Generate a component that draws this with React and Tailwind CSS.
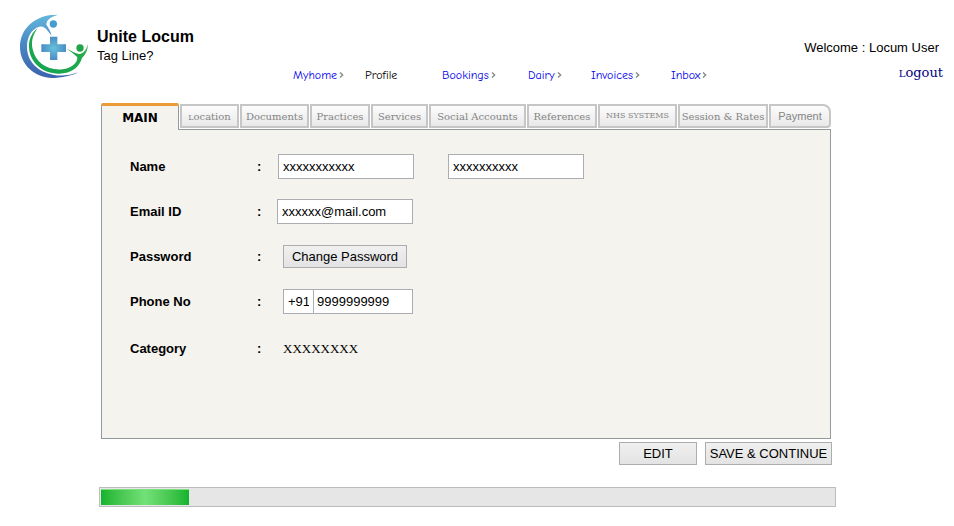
import React from "react";

const sans = "font-['Liberation_Sans',Arial,sans-serif]";
const slab = "font-['DejaVu_Serif',serif]";

const navItems = [
  { label: "Myhome", menu: true },
  { label: "Profile", current: true },
  { label: "Bookings", menu: true },
  { label: "Dairy", menu: true },
  { label: "Invoices", menu: true },
  { label: "Inbox", menu: true },
];

const tabs = [
  { label: "Location", style: "text-[10px] first-letter:text-[8px]" },
  { label: "Documents", style: "text-[10px]" },
  { label: "Practices", style: "text-[10px]" },
  { label: "Services", style: "text-[10px]" },
  { label: "Social Accounts", style: "text-[10px]" },
  { label: "References", style: "text-[10px]" },
  { label: "NHS SYSTEMS", style: "text-[8px]" },
  { label: "Session & Rates", style: "text-[10px]" },
];

const tabBase =
  "h-6 overflow-hidden whitespace-nowrap border-2 border-[#c6c6c6] bg-linear-to-b from-[#fcfcfc] to-[#e9e9e9] text-center text-[#858585]";
const field = "h-[25px] border border-[#abadb3] bg-white px-1 text-[13px] text-black outline-none";
const button = "h-[23px] border border-[#adadad] bg-linear-to-b from-[#f0f0f0] to-[#e3e3e3] text-[13px] text-black";

function Logo() {
  return (
    <svg className="h-16 w-[69px] shrink-0" viewBox="30 28 207 192" role="img" aria-label="Unite Locum logo">
      <defs>
        <linearGradient id="blue" x1="0" y1="0" x2="0" y2="1">
          <stop offset="0" stopColor="#62b8dc" />
          <stop offset=".45" stopColor="#4a88c4" />
          <stop offset="1" stopColor="#3b62ad" />
        </linearGradient>
        <linearGradient id="green" x1="0" y1="1" x2="1" y2="0">
          <stop offset="0" stopColor="#12a551" />
          <stop offset=".6" stopColor="#1fa84c" />
          <stop offset="1" stopColor="#62bb46" />
        </linearGradient>
        <radialGradient id="cross">
          <stop offset="0" stopColor="#67c1da" />
          <stop offset="1" stopColor="#4a8dc6" />
        </radialGradient>
      </defs>
      <path
        fill="url(#blue)"
        d="M144 30C80 28 30 68 30 127C30 184 82 226 140 219C166 217 189 212 206 203C180 212 153 216 129 210C83 201 51 170 51 126C51 96 64 73 88 66C97 64 105 68 111 76L125 93C122 80 116 70 109 60C109 47 120 37 144 30Z"
      />
      <path
        fill="url(#green)"
        d="M84 70C65 84 56 104 57 128C59 176 101 208 147 207C185 206 208 188 216 160C228 149 234 134 234 117C229 136 221 146 207 148C196 147 183 137 170 132C181 140 195 150 202 158C203 175 184 191 158 194C114 199 76 174 68 134C62 109 70 86 84 70Z"
      />
      <path fill="url(#cross)" d="M120 96h22v23h26v23h-26v24h-22v-24H94v-23h26z" />
      <circle cx="130" cy="58" r="11" fill="#459cce" />
      <circle cx="210" cy="130" r="11" fill="#23a34b" />
    </svg>
  );
}

function Chevron() {
  return (
    <svg className="h-2 w-[5px]" viewBox="0 0 5 8" fill="none" stroke="#858585" strokeWidth="1.3" aria-hidden="true">
      <path d="M1 1.5L3.7 4L1 6.5" />
    </svg>
  );
}

function Row({ label, htmlFor, children }) {
  return (
    <>
      {htmlFor ? (
        <label htmlFor={htmlFor} className="font-bold">{label}</label>
      ) : (
        <span className="font-bold">{label}</span>
      )}
      <span className="font-bold">:</span>
      <div className="flex items-center">{children}</div>
    </>
  );
}

export default function App() {
  return (
    <div className={`${sans} min-h-screen bg-white text-[13px] text-black`}>
      <header className="flex pt-3.5 pl-5">
        <Logo />
        <div className="ml-2 w-[196px] shrink-0 pt-[13px]">
          <h1 className="text-base leading-5 font-bold">Unite Locum</h1>
          <p className="leading-[18px]">Tag Line?</p>
        </div>
        <nav className="grid shrink-0 grid-cols-[72px_77px_86px_63px_80px_40px] self-start pt-[52px] font-['Comic_Sans_MS','Comic_Neue','Open_Sans',sans-serif] text-xs leading-[18px]">
          {navItems.map((item) => (
            <a
              key={item.label}
              href="#"
              aria-current={item.current ? "page" : undefined}
              className={`flex items-center gap-0.5 ${item.current ? "text-black" : "text-[#0000ee]"}`}
            >
              {item.label}
              {item.menu && <Chevron />}
            </a>
          ))}
        </nav>
        <div className="ml-auto flex shrink-0 flex-col items-end pt-[25px] pr-[11px]">
          <p className="pr-1 leading-[18px]">Welcome : Locum User</p>
          <a href="#" className={`${slab} mt-[7px] block text-[13px] leading-[18px] text-[#000080] first-letter:text-[10px]`}>
            Logout
          </a>
        </div>
      </header>

      <main className="mt-[19px] pr-[123px] pl-[101px]">
        <div
          role="tablist"
          className="grid grid-cols-[78fr_59fr_69fr_60fr_57fr_97fr_70fr_79fr_90fr_62fr] items-start gap-x-px"
        >
          <button
            role="tab"
            aria-selected="true"
            className="relative z-10 -mb-px h-[27px] rounded-t-xs border-x border-t-3 border-x-[#919b9c] border-t-[#eb9b35] bg-[#f4f3ee] font-['Verdana','DejaVu_Sans',sans-serif] text-xs font-bold"
          >
            MAIN
          </button>
          {tabs.map((tab) => (
            <button
              key={tab.label}
              role="tab"
              aria-selected="false"
              className={`${tabBase} ${slab} mt-px ${tab.style}`}
            >
              {tab.label}
            </button>
          ))}
          <button role="tab" aria-selected="false" className={`${tabBase} mt-px rounded-tr-lg rounded-br-sm text-[11px]`}>
            Payment
          </button>
        </div>

        <form id="profile" className="min-h-[310px] border border-[#919b9c] bg-[#f4f3ee] px-7 pt-6" onSubmit={(e) => e.preventDefault()}>
          <div className="grid grid-cols-[127px_20px_1fr] grid-rows-[25px_25px_25px_25px_30px] items-center gap-y-5">
            <Row label="Name" htmlFor="first">
              <input id="first" defaultValue="xxxxxxxxxxx" className={`${field} ml-px w-[136px]`} />
              <input aria-label="Last name" defaultValue="xxxxxxxxxx" className={`${field} ml-[34px] w-[136px]`} />
            </Row>
            <Row label="Email ID" htmlFor="email">
              <input id="email" type="email" defaultValue="xxxxxx@mail.com" className={`${field} w-[136px]`} />
            </Row>
            <Row label="Password">
              <button type="button" className={`${button} ml-1.5 w-[124px]`}>Change Password</button>
            </Row>
            <Row label="Phone No" htmlFor="phone">
              <input aria-label="Country code" defaultValue="+91" className={`${field} ml-1.5 w-[30px] border-r-0`} />
              <input id="phone" type="tel" defaultValue="9999999999" className={`${field} w-[100px] px-[3px]`} />
            </Row>
            <Row label="Category">
              <span className="ml-1.5 font-['Liberation_Serif',serif]">XXXXXXXX</span>
            </Row>
          </div>
        </form>

        <div className="-mr-px mt-[3px] flex justify-end gap-2">
          <button type="button" className={`${button} w-[78px]`}>EDIT</button>
          <button type="submit" form="profile" className={`${button} w-[127px]`}>SAVE &amp; CONTINUE</button>
        </div>
      </main>

      <div className="mt-[22px] pr-[118px] pl-[99px]">
        <div
          role="progressbar"
          aria-label="Profile completion"
          aria-valuenow={12}
          aria-valuemin={0}
          aria-valuemax={100}
          className="h-5 border border-[#bcbcbc] bg-[#e6e6e6] p-px"
        >
          <div className="h-full w-[12%] border-t border-[#7be37d] bg-linear-to-r from-[#0eb32c] via-[#72e177] to-[#0eb32c]" />
        </div>
      </div>
    </div>
  );
}
